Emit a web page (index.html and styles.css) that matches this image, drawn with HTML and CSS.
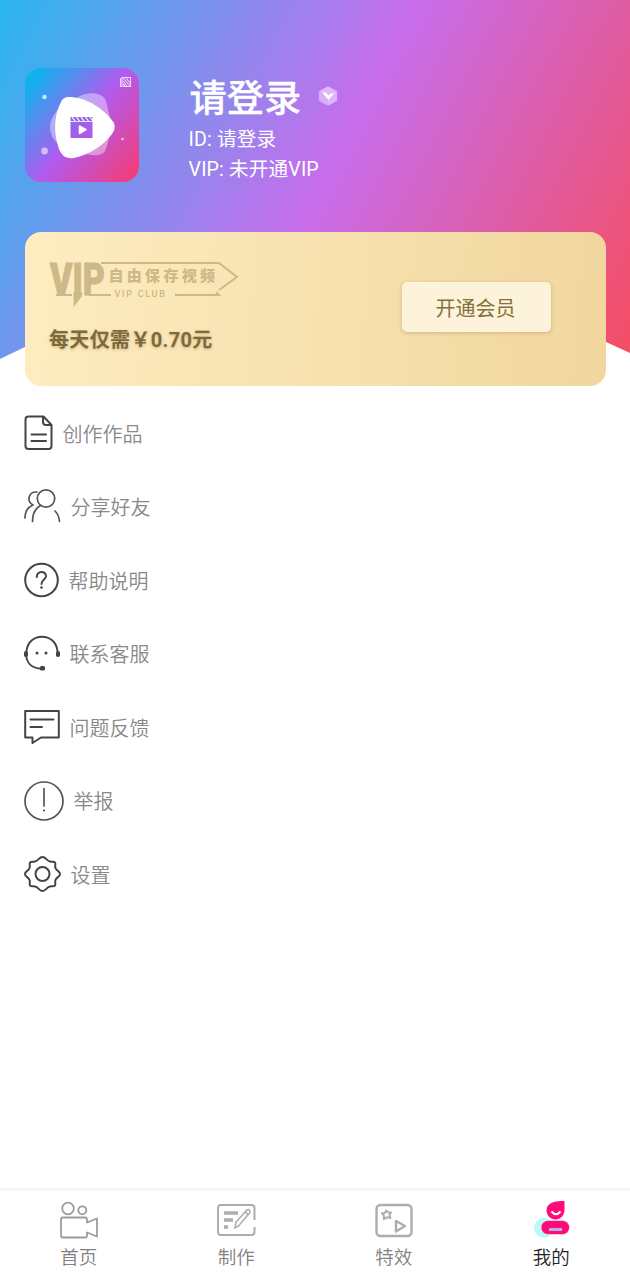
FILE: index.html
```html
<!DOCTYPE html>
<html lang="zh-CN">
<head>
<meta charset="utf-8">
<title>我的</title>
<link rel="stylesheet" href="styles.css">
</head>
<body>
<div class="app">
  <header class="hero">
    <svg class="avatar" viewBox="0 0 114 114">
      <defs>
        <linearGradient id="av" x1="0" y1="0.1" x2="1" y2="0.9">
          <stop offset="0.05" stop-color="#12b1ee"/><stop offset="0.5" stop-color="#b05bef"/><stop offset="1" stop-color="#f43d78"/>
        </linearGradient>
        <linearGradient id="clip" x1="0" y1="0" x2="1" y2="1">
          <stop offset="0" stop-color="#8d68ea"/><stop offset="1" stop-color="#b956e4"/>
        </linearGradient>
      </defs>
      <rect width="114" height="114" rx="16" fill="url(#av)"/>
      <path d="M55 28C66 23 78 25 81 33L85 50C88 58 82 80 80 83Q78 88 66 87L44 82C30 76 25 68 25 59C25 51 31 43 38 36Z" fill="#fff" opacity=".4"/>
      <path d="M36 34C39 27 46 29 53 30C66 33 78 41 86 51Q93 58 87 66C79 77 64 87 49 90C41 91 37 88 34 81C29 67 28 49 36 34Z" fill="#fff"/>
      <path d="M45.500 54h22v16h-22z" fill="url(#clip)"/>
      <path d="M45.500 49h22v4.200h-22z" fill="#9763e7"/>
      <path d="M47 49l3 4M51.500 49l3 4M56 49l3 4M60.500 49l3 4M65 49l3 4" stroke="#fff" stroke-width="1.200"/>
      <path d="M54.500 58v7.500l6.500-3.800z" fill="#fff" stroke="#fff" stroke-width="1.500" stroke-linejoin="round"/>
      <circle cx="19.500" cy="29" r="2.300" fill="#b9f1ff"/>
      <circle cx="19.500" cy="83" r="3.400" fill="#fff" opacity=".55"/>
      <circle cx="97.500" cy="71" r="1.300" fill="#fff" opacity=".65"/>
      <g fill="none" stroke="#fff" opacity=".75" stroke-width="1.100">
        <path d="M95.500 10v8.500h8.500M97 9.500h8.500v9H97zM98 10l7 8M101 10l4 5M98 13l4 5M98 16l2 2"/>
      </g>
    </svg>
    <div class="profile">
      <div class="name-row">
        <h1 class="name">请登录</h1>
        <svg class="hex" viewBox="0 0 20 20">
          <path d="M10 .8l8.600 4.600v9.200L10 19.200 1.400 14.600V5.400z" fill="#e8c8fa" opacity=".8" stroke="#e8c8fa" stroke-linejoin="round"/>
          <path d="M1.400 5.400L10 10v9.200l-8.600-4.600z" fill="#d6a5f4" opacity=".6"/>
          <path d="M4 6.600h4l2.300 3 2-1.600 4-1-5.800 7z" fill="#fff"/>
        </svg>
      </div>
      <p class="meta">ID: 请登录</p>
      <p class="meta">VIP: 未开通VIP</p>
    </div>
  </header>

  <section class="card">
    <div class="offer">
      <svg class="club" viewBox="0 0 190 46">
        <g fill="none" stroke="#cdb887" stroke-width="2">
          <path d="M51 2H169L187 16 169 29M6 34H22M39 34H61M125 34H169L166 31"/>
        </g>
        <path d="M23.500 31V46L28 40.500 32 35V31z" fill="#cdb887"/>
        <text class="club-vip" x="0" y="34" textLength="55" lengthAdjust="spacingAndGlyphs">VIP</text>
        <text class="club-title" x="58.500" y="19.500">自由保存视频</text>
        <text class="club-sub" x="64.500" y="35.500">VIP CLUB</text>
      </svg>
      <p class="price">每天仅需￥0.70元</p>
    </div>
    <button class="open">开通会员</button>
  </section>

  <ul class="menu">
    <li class="item"><svg width="29" height="36" viewBox="0 0 29 36"><path d="M4 1.500H19.500L27.500 10V31Q27.500 34 24.500 34H4.500Q1.500 34 1.500 31V4.500Q1.500 1.500 4.500 1.500ZM19 1.500V7Q19 10 22 10H27.500M7.500 19.500H22M7.500 26H22"/></svg><span>创作作品</span></li>
    <li class="item"><svg class="thin" width="37" height="36" viewBox="0 0 37 36"><circle cx="22" cy="10.500" r="8.700"/><path d="M13 4C4 3.500 2.500 13.500 9 17C4 19 1 24 1 30M16.500 17.500C11 20.500 8.500 26.500 8.500 33.500M31 23Q35 27 35.500 33.500"/></svg><span>分享好友</span></li>
    <li class="item"><svg width="35" height="36" viewBox="0 0 35 36"><circle cx="17.500" cy="18" r="16.300"/><path d="M12.800 15C12.500 8.500 22.500 8.500 22 14.500C21.800 17.500 17.500 18 17.500 22"/><circle class="dot" cx="17.500" cy="25.500" r="1.300"/></svg><span>帮助说明</span></li>
    <li class="item"><svg width="36" height="36" viewBox="0 0 36 36"><path d="M2.500 16C4.500 -3 31.500 -3 33.500 16M2 20C3 29 9 34 18.500 33.500"/><g class="dot"><rect x="0" y="16" width="4" height="6" rx="1.800"/><rect x="32" y="16" width="4" height="6" rx="1.800"/><rect x="16" y="31" width="5" height="4.500" rx="1.500"/><circle cx="13" cy="18" r="1.500"/><circle cx="22" cy="18" r="1.500"/></g></svg><span>联系客服</span></li>
    <li class="item"><svg width="36" height="36" viewBox="0 0 36 36"><path d="M1.200 2H34.800V28.500H17L8.500 34V28.500H1.200ZM6.500 10.500H29.500M6.500 18H18"/></svg><span>问题反馈</span></li>
    <li class="item"><svg class="thin" width="40" height="41" viewBox="0 0 40 41"><circle cx="20" cy="21" r="19"/><path d="M20 8.500V26"/><circle class="dot" cx="20" cy="30.500" r="1"/></svg><span>举报</span></li>
    <li class="item"><svg width="37" height="38" viewBox="0 0 37 38"><path d="M18.500 2C22 2 22.500 6 26 6.500C28 7 30 6 31 7.500C32 9 30.500 11 31.500 13C32.500 16 36 16 36 19S32.500 22 31.500 25C30.500 27 32 29 31 30.500C30 32 28 31 26 31.500C22.500 32 22 36 18.500 36S14.500 32 11 31.500C9 31 7 32 6 30.500C5 29 6.500 27 5.500 25C4.500 22 1 22 1 19S4.500 16 5.500 13C6.500 11 5 9 6 7.500C7 6 9 7 11 6.500C14.500 6 15 2 18.500 2Z"/><circle cx="18.500" cy="19" r="7"/></svg><span>设置</span></li>
  </ul>

  <nav class="tabs">
    <a class="tab"><svg width="40" height="38" viewBox="0 0 40 38"><g fill="none" stroke="#9a9ca3" stroke-width="1.800" stroke-linejoin="round"><circle cx="9" cy="7.500" r="5.800"/><circle cx="23.300" cy="9.300" r="4"/><path d="M4 16.500H26Q28 16.500 28 18.500V21.500L38 17.500V35.500L28 31.500V34.500Q28 36.500 26 36.500H4Q2 36.500 2 34.500V18.500Q2 16.500 4 16.500Z"/></g></svg>首页</a>
    <a class="tab"><svg width="40" height="38" viewBox="0 0 40 38"><g fill="none" stroke="#adadad" stroke-width="2"><path d="M38.500 19V7Q38.500 4 35.500 4H5Q2 4 2 7V31Q2 34 5 34H35.500Q38.500 34 38.500 31V26"/><path d="M8 12H22M8 19H17M8 26H12" stroke-width="3.500"/><path d="M19 27L20 21L31 9Q33 8 34 10Q34.500 11 33.500 12L22.500 25ZM29.500 11L32 13.500" stroke-width="1.600"/></g></svg>制作</a>
    <a class="tab"><svg width="40" height="38" viewBox="0 0 40 38"><g fill="none" stroke="#adadad" stroke-width="2.400" stroke-linejoin="round"><rect x="2.500" y="4" width="35" height="31" rx="4"/><path d="M22 20L31 25 22 30.500Z"/><path d="M12 9.500L14.300 11.600 17 11.500 15.500 14 16.300 17 13 16.300 9.800 18 10 14.800 8 12.300 11 12Z" stroke-width="2"/></g></svg>特效</a>
    <a class="tab active"><svg width="40" height="38" viewBox="0 0 40 38"><circle cx="13" cy="27" r="10" fill="#b8fafa"/><path d="M33.500 0Q16 -.500 15.500 9C15.500 14.500 19.500 18.500 24.500 18.500S33.500 14 33.500 9Z" fill="#ff0b78"/><rect x="10" y="19.500" width="28.500" height="14" rx="7" fill="#ff0b78" stroke="#fff" stroke-width=".500"/><path d="M20.500 10.500Q25 16 29.500 10.500" fill="none" stroke="#fff" stroke-width="2"/><path d="M18 28.500H31" stroke="#b6aeea" stroke-width="3"/></svg>我的</a>
  </nav>
</div>
</body>
</html>
```
FILE: styles.css
```css
* { box-sizing: border-box; }
body, h1, p, ul { margin: 0; padding: 0; }
body { background: #fff; font-family: Roboto, "Noto Sans CJK SC", sans-serif; }
.app { display: flex; flex-direction: column; height: 1280px; width: 630px; }

.hero {
  display: flex;
  align-items: flex-start;
  gap: 49.500px;
  height: 360px;
  padding: 68px 25px 0;
  background: linear-gradient(117.500deg, #29b8ee 0%, #c76dec 51%, #f54d62 100%);
  clip-path: polygon(0 0, 100% 0, 100% 353px, 606px 342px, 500px 315px, 120px 315px, 25px 347px, 0 359px);
}
.avatar { width: 114px; height: 114px; }
.profile { color: #fff; padding-top: 6px; }
.name-row { display: flex; align-items: center; gap: 17px; height: 50px; padding-left: 1px; }
.name { font-size: 37.300px; font-weight: 500; line-height: 50px; -webkit-text-stroke: .3px #fff; }
.hex { width: 20px; height: 20px; margin-top: -6px; }
.meta { font-size: 19.600px; line-height: 30px; position: relative; top: 1px; letter-spacing: .15px; }

.card {
  display: flex;
  justify-content: space-between;
  align-items: flex-start;
  height: 154px;
  margin: -128px 24px 0 25px;
  padding: 29px 55px 0 25px;
  border-radius: 16px;
  background: linear-gradient(95deg, #fdedc1, #f1d69e);
  position: relative;
}
.offer { display: flex; flex-direction: column; gap: 18px; }
.club { width: 190px; height: 46px; overflow: visible; }
.club text { fill: #cdb887; }
.club-vip { font: 900 45px Roboto, sans-serif; stroke: #cdb887; stroke-width: 1; }
.club-title { font: 900 15px "Noto Sans CJK SC", sans-serif; letter-spacing: 3.300px; }
.club-sub { font: 500 9px Roboto, sans-serif; letter-spacing: 1.700px; }
.price { margin-left: -1px; color: #7d693c; font-size: 20px; font-weight: 700; line-height: 30px; letter-spacing: .35px; text-shadow: 0 1px 3px #9b7d4580; white-space: nowrap; }
.open {
  width: 149px;
  height: 50px;
  margin-top: 21px;
  padding-right: 8px;
  border: 0;
  border-radius: 5px;
  background: #fdf3da;
  box-shadow: 0 1px 4px #8b6d3555;
  color: #85703d;
  font: 20px "Noto Sans CJK SC", sans-serif;
}

.menu { flex: 1; list-style: none; padding: 10px 24px 0; }
.item { display: flex; align-items: center; gap: 9.500px; height: 73.500px; color: #888; font: 350 20px/30px "Noto Sans CJK SC", sans-serif; }
.item span { padding-top: 2px; }
.item svg { fill: none; stroke: #444; stroke-width: 2; stroke-linecap: round; stroke-linejoin: round; }
.item .thin { stroke-width: 1.700; stroke: #555; }
.item .dot { fill: #444; stroke: none; }

.tabs { display: grid; grid-template-columns: repeat(4, 1fr); height: 92px; border-top: 3px solid #f7f7f7; }
.tab { display: flex; flex-direction: column; align-items: center; padding-top: 10px; color: #808080; font: 350 18.500px/35px "Noto Sans CJK SC", sans-serif; }
.active { color: #222; }
```
